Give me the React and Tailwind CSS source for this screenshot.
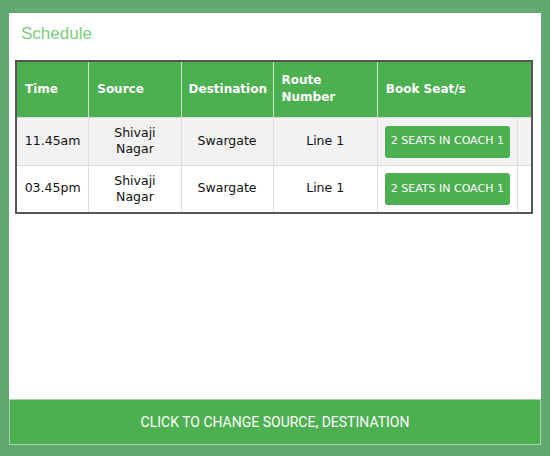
export default function App() {
  const rows = [
    { time: '11.45am', src: 'Shivaji Nagar', dst: 'Swargate', route: 'Line 1', bg: 'bg-[#f2f2f2]' },
    { time: '03.45pm', src: 'Shivaji Nagar', dst: 'Swargate', route: 'Line 1', bg: 'bg-white' },
  ]
  return (
    <div className="w-[550px] h-[456px] bg-[#61a970] pt-[13px] px-[9px] flex flex-col">
      <div className="bg-white flex-1 flex flex-col">
        <h2 className="px-[12px] pt-[8px] h-[47px] text-[17px] text-[#7ccd7e] font-['Liberation_Sans',sans-serif]">
          Schedule
        </h2>
        <div className="px-[6px]">
          <table className="w-[518px] border-collapse border-2 border-[#555] font-['DejaVu_Sans',sans-serif] text-[12.5px] text-[#111]">
            <thead>
              <tr className="bg-[#4caf50] text-white h-[56px] text-left text-[12px]">
                <th className="w-[73px] pl-[8px] font-bold border-r border-[#c8e6c9]">Time</th>
                <th className="w-[93px] pl-[8px] font-bold border-r border-[#c8e6c9]">Source</th>
                <th className="w-[92px] pl-[7px] font-bold border-r border-[#c8e6c9]">Destination</th>
                <th className="w-[105px] pl-[8px] font-bold border-r border-[#c8e6c9] leading-[17px]">Route<br />Number</th>
                <th colSpan={2} className="pl-[8px] font-bold">Book Seat/s</th>
              </tr>
            </thead>
            <tbody>
              {rows.map((r, i) => (
                <tr key={i} className={`${r.bg} h-[48px] border-t border-[#ddd]`}>
                  <td className="text-center border-r border-[#ddd]">{r.time}</td>
                  <td className="text-center border-r border-[#ddd] leading-[16px]">Shivaji<br />Nagar</td>
                  <td className="text-center border-r border-[#ddd]">{r.dst}</td>
                  <td className="text-center border-r border-[#ddd]">{r.route}</td>
                  <td className="w-[140px] pl-[7px] border-r border-[#ddd]">
                    <button className="bg-[#4caf50] text-white text-[11px] rounded-[3px] w-[125px] h-[32px] mt-[1px]">
                      2 SEATS IN COACH 1
                    </button>
                  </td>
                  <td className="w-[15px]"></td>
                </tr>
              ))}
            </tbody>
          </table>
        </div>
        <div className="flex-1" />
      </div>
      <button className="h-[46px] w-[532px] bg-[#4caf50] border border-[#a5d6a7] text-white text-[14px] font-['Roboto',sans-serif] mb-[11px]">
        CLICK TO CHANGE SOURCE, DESTINATION
      </button>
    </div>
  )
}
